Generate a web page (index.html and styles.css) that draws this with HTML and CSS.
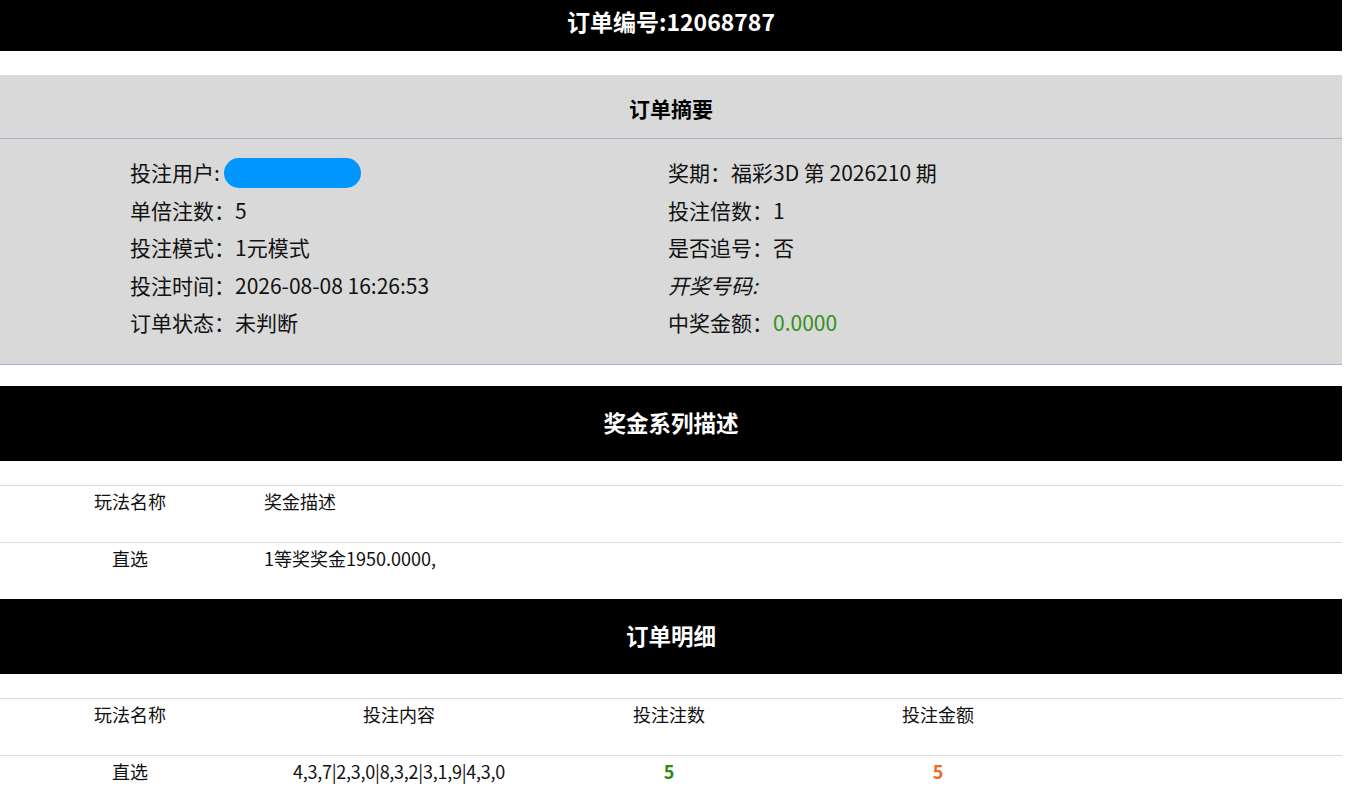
FILE: index.html
```html
<!DOCTYPE html>
<html lang="zh-CN">
<head>
<meta charset="utf-8">
<title>订单详情</title>
<link rel="stylesheet" href="styles.css">
</head>
<body>
<div class="page">
  <div class="title-bar">订单编号:12068787</div>

  <section class="summary">
    <h2 class="summary-head">订单摘要</h2>
    <div class="summary-body">
      <div class="col">
        <div class="row">投注用户:<span class="blob"></span></div>
        <div class="row">单倍注数：5</div>
        <div class="row">投注模式：1元模式</div>
        <div class="row">投注时间：2026-08-08 16:26:53</div>
        <div class="row">订单状态：未判断</div>
      </div>
      <div class="col">
        <div class="row">奖期：福彩3D 第 2026210 期</div>
        <div class="row">投注倍数：1</div>
        <div class="row">是否追号：否</div>
        <div class="row"><em>开奖号码:</em></div>
        <div class="row">中奖金额：<span class="green">0.0000</span></div>
      </div>
    </div>
  </section>

  <div class="band">奖金系列描述</div>
  <div class="table prize">
    <div class="tr">
      <div class="td c">玩法名称</div>
      <div class="td l">奖金描述</div>
    </div>
    <div class="tr">
      <div class="td c">直选</div>
      <div class="td l">1等奖奖金1950.0000,</div>
    </div>
  </div>

  <div class="band">订单明细</div>
  <div class="table detail">
    <div class="tr">
      <div class="td c">玩法名称</div>
      <div class="td c">投注内容</div>
      <div class="td c">投注注数</div>
      <div class="td c">投注金额</div>
      <div class="td"></div>
    </div>
    <div class="tr">
      <div class="td c">直选</div>
      <div class="td c nums">4,3,7|2,3,0|8,3,2|3,1,9|4,3,0</div>
      <div class="td c"><b class="green-b">5</b></div>
      <div class="td c"><b class="orange-b">5</b></div>
      <div class="td"></div>
    </div>
  </div>
</div>
</body>
</html>
```
FILE: styles.css
```css
html, body {
  margin: 0;
  padding: 0;
  background: #fff;
}
body {
  font-family: "Noto Sans CJK SC", "Noto Sans", sans-serif;
  color: #111;
  overflow: hidden;
}
.page {
  width: 1342px;
}
.title-bar {
  background: #000;
  color: #fff;
  height: 51px;
  line-height: 42px;
  text-align: center;
  font-size: 23px;
  font-weight: 700;
  margin-bottom: 24px;
}
.summary {
  background: #d9d9d9;
  border-bottom: 1px solid #a8b1cc;
  margin-bottom: 21px;
}
.summary-head {
  margin: 0;
  height: 63px;
  line-height: 66px;
  text-align: center;
  font-size: 21px;
  font-weight: 700;
  color: #000;
  border-bottom: 1px solid #a8b1cc;
}
.summary-body {
  display: grid;
  grid-template-columns: 538px 1fr;
  padding: 15px 0 22px 130px;
  font-size: 21px;
}
.row {
  height: 37.5px;
  line-height: 37.5px;
  display: flex;
  align-items: center;
  white-space: nowrap;
}
.row em {
  font-style: italic;
}
.blob {
  display: inline-block;
  width: 137px;
  height: 30px;
  border-radius: 15px;
  background: #0096ff;
  margin-left: 4px;
}
.green {
  color: #33901c;
}
.band {
  background: #000;
  color: #fff;
  height: 75px;
  line-height: 72px;
  text-align: center;
  font-size: 22.5px;
  font-weight: 700;
  margin-bottom: 24px;
}
.table {
  border-top: 1px solid #dcdcdc;
  font-size: 18px;
}
.tr {
  display: grid;
  height: 56px;
  border-bottom: 1px solid #dcdcdc;
}
.tr:last-child {
  border-bottom: none;
}
.prize .tr {
  grid-template-columns: 260px 1fr;
}
.detail .tr {
  grid-template-columns: 260px 278px 262px 276px 1fr;
}
.td {
  padding-top: 3px;
  line-height: 24px;
  white-space: nowrap;
}
.td.c {
  text-align: center;
}
.td.l {
  text-align: left;
  padding-left: 4px;
}
.nums {
  letter-spacing: -0.25px;
}
.green-b {
  color: #2f8a12;
  font-weight: 700;
}
.orange-b {
  color: #f26a1f;
  font-weight: 700;
}
```
